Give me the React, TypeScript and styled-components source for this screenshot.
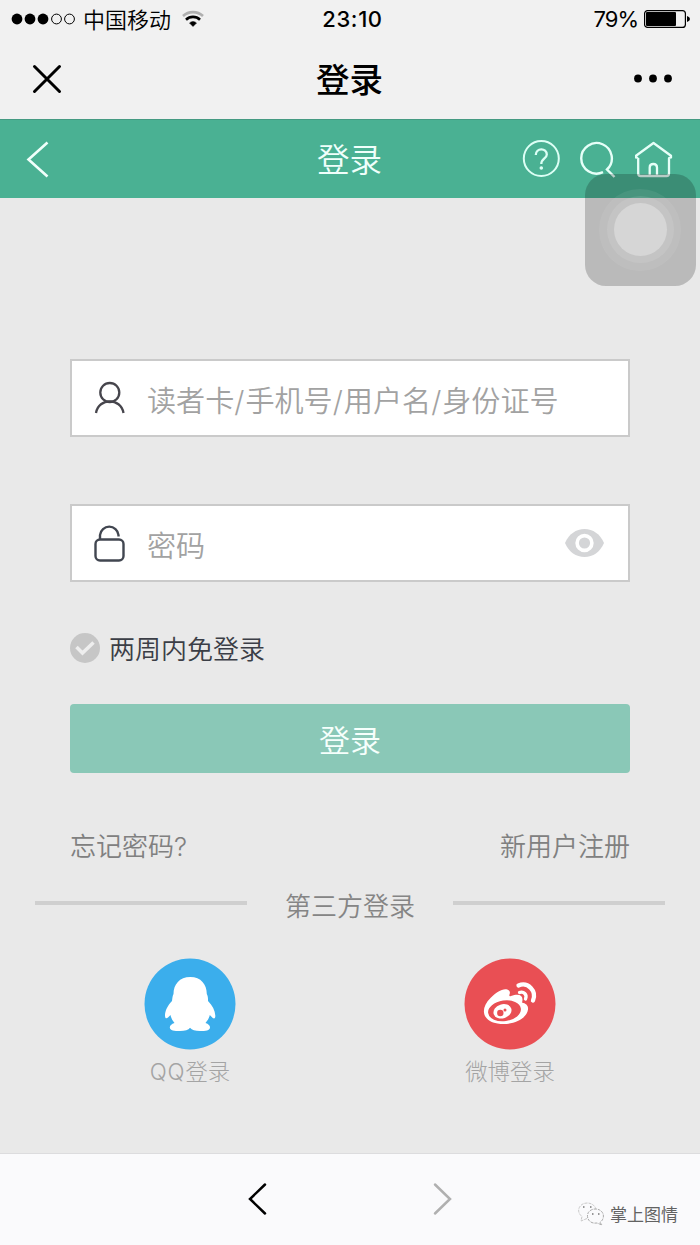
import React from "react";
import styled, { createGlobalStyle } from "styled-components";

const GlobalStyle = createGlobalStyle`
  * { box-sizing: border-box; }
  body {
    margin: 0;
    background: #e9e9e9;
    font-family: "Noto Sans CJK SC", sans-serif;
  }
`;

const Screen = styled.div`
  position: relative;
  width: 700px;
  height: 1245px;
  display: flex;
  flex-direction: column;
  background: #e9e9e9;
  overflow: hidden;
`;

const StatusBar = styled.div`
  display: grid;
  grid-template-columns: 1fr auto 1fr;
  align-items: center;
  height: 38px;
  padding: 0 10px 0 11px;
  background: #f1f1f1;
  color: #000;
`;

const StatusGroup = styled.div<{ $end?: boolean }>`
  display: flex;
  align-items: center;
  justify-content: ${(p) => (p.$end ? "flex-end" : "flex-start")};
`;

const Carrier = styled.span`
  margin: 0 11px 0 7px;
  font-size: 22px;
  font-weight: 350;
  line-height: 36px;
  padding-bottom: 2px;
`;

const Clock = styled.span`
  padding: 1px 0 0 4px;
  font: 500 22px/37px Inter, sans-serif;
  letter-spacing: 0.6px;
`;

const Percent = styled.span`
  margin-right: 6px;
  padding-top: 1px;
  font: 400 22px/37px Inter, sans-serif;
  letter-spacing: -1px;
`;

const TitleBar = styled.header`
  display: grid;
  grid-template-columns: 1fr auto 1fr;
  align-items: center;
  height: 81px;
  padding: 0 27px 0 32px;
  background: #f1f1f1;
`;

const TitleText = styled.h1`
  margin: 0;
  padding: 0 6px 2px 0;
  font-size: 33.5px;
  font-weight: 500;
  line-height: 78px;
`;

const Green = styled.header`
  display: grid;
  grid-template-columns: 1fr auto 1fr;
  align-items: center;
  height: 79px;
  padding: 0 27px 0 26px;
  border-top: 1px solid #459a82;
  background: #4ab193;
  color: #f0fffb;
`;

const PageTitle = styled.h2`
  margin: 0;
  padding: 0 0 4px;
  font-size: 32.5px;
  font-weight: 350;
  line-height: 73px;
`;

const Actions = styled.div`
  display: flex;
  justify-content: flex-end;
  align-items: center;
  gap: 19px;
`;

const Content = styled.main`
  flex: 1;
  display: flex;
  flex-direction: column;
  padding-top: 161px;
`;

const Form = styled.form`
  display: flex;
  flex-direction: column;
  padding: 0 70px;
`;

const Field = styled.label<{ $gap: number }>`
  display: flex;
  align-items: center;
  height: 78px;
  margin-bottom: ${(p) => p.$gap}px;
  padding: 0 24px 0 22px;
  border: 2px solid #cacaca;
  background: #fff;
`;

const Placeholder = styled.span`
  flex: 1;
  height: 40px;
  margin: 1px 0 0 22px;
  color: #a2a2a2;
  font-size: 29.1px;
  font-weight: 350;
  line-height: 40px;
  white-space: nowrap;
`;

const Remember = styled.label`
  display: flex;
  align-items: center;
  gap: 8px;
  height: 38px;
  color: #3b3e46;
  font-size: 26px;
  font-weight: 350;
  line-height: 38px;
`;

const Submit = styled.button`
  height: 69px;
  margin-top: 37px;
  padding: 0;
  border: 0;
  border-radius: 4px;
  background: #8ac8b7;
  color: #f6fffc;
  font: 350 31px/68px "Noto Sans CJK SC", sans-serif;
`;

const Links = styled.div`
  display: flex;
  justify-content: space-between;
  height: 38px;
  margin-top: 53px;
  color: #808080;
  font-size: 26px;
  font-weight: 350;
  line-height: 38px;
`;

const Latin = styled.span<{ $spacing?: number }>`
  font-family: Inter, sans-serif;
  line-height: 1;
  letter-spacing: ${(p) => p.$spacing ?? 0}px;
`;

const Divider = styled.div`
  display: flex;
  align-items: center;
  justify-content: space-between;
  margin-top: 22px;
  padding: 0 35px 0 35px;
  height: 38px;
  color: #858585;
  font-size: 26px;
  font-weight: 350;
  line-height: 38px;
`;

const Rule = styled.span`
  width: 212px;
  height: 4px;
  margin-bottom: 4px;
  background: #cfcfcf;
`;

const Providers = styled.div`
  display: flex;
  justify-content: space-between;
  margin-top: 34px;
  padding: 0 130px;
`;

const Provider = styled.div`
  display: flex;
  flex-direction: column;
  align-items: center;
  width: 120px;
  color: #a4a4a4;
`;

const ProviderName = styled.span`
  height: 36px;
  margin-top: 2px;
  font-size: 22.4px;
  font-weight: 300;
  line-height: 36px;
`;

const Toolbar = styled.footer`
  display: flex;
  align-items: center;
  height: 92px;
  padding: 0 0 2px 247px;
  border-top: 1px solid #dcdcde;
  background: #fafafc;
`;

const NavGlyph = styled.svg`
  margin-right: 165px;
`;

const Watermark = styled.div`
  position: absolute;
  right: 22px;
  bottom: 18px;
  display: flex;
  align-items: center;
  gap: 5px;
  color: #626262;
  font-size: 17px;
  line-height: 26px;
`;

const TouchPad = styled.div`
  position: absolute;
  top: 174px;
  left: 584.5px;
  width: 111px;
  height: 111.5px;
  border-radius: 21px;
  background: rgba(0, 0, 0, 0.2);
  display: flex;
  align-items: center;
  justify-content: center;
`;

const TouchRing = styled.div<{ $size: number; $alpha: number }>`
  display: flex;
  align-items: center;
  justify-content: center;
  width: ${(p) => p.$size}px;
  height: ${(p) => p.$size}px;
  border-radius: 50%;
  background: rgba(255, 255, 255, ${(p) => p.$alpha});
`;

const SignalDots = () => (
  <svg width="65" height="14" viewBox="0 0 65 14">
    {[6, 19, 32].map((x) => <circle key={x} cx={x} cy="7" r="5.4" />)}
    {[45.5, 58.5].map((x) => <circle key={x} cx={x} cy="7" r="4.9" fill="none" stroke="#000" strokeWidth="1" />)}
  </svg>
);

const Wifi = () => (
  <svg width="22" height="18" viewBox="0 0 22 18" fill="none" strokeWidth="2.6">
    <path d="M1 6C6.500 .8 15.500 .8 21 6" stroke="#b0b0b0" />
    <path d="M4 9.700C8 5.900 14 5.900 18 9.700" stroke="#000" />
    <path d="M7.500 13C9.700 11 12.300 11 14.500 13L11 16.500Z" fill="#000" stroke="#000" strokeWidth=".5" />
  </svg>
);

const Battery = () => (
  <svg width="46" height="18" viewBox="0 0 46 18">
    <rect x=".6" y=".6" width="40.8" height="16.8" rx="3" fill="none" stroke="#000" strokeWidth="1.2" />
    <rect x="2" y="2" width="30" height="14" rx="1" />
    <path d="M43 6q3 .8 3 3t-3 3z" />
  </svg>
);

const Eye = () => (
  <svg width="39" height="28" viewBox="0 0 39 28">
    <path d="M0 14C4 5 11 0 19.5 0S35 5 39 14C35 23 28 28 19.5 28S4 23 0 14Z" fill="#d4d5d7" />
    <circle cx="19.5" cy="14" r="7.4" fill="#d4d5d7" stroke="#fff" strokeWidth="3.6" />
  </svg>
);

const QQ = () => (
  <svg width="92" height="92" viewBox="0 0 92 92">
    <circle cx="46" cy="46" r="45.5" fill="#3baeec" />
    <path fill="#fff" d="M46.300 19C35.500 19 29.500 26.500 29.500 36C28.300 38.500 28.300 41 28 43C23.500 47.500 21 53 21 57.500C21 60.500 22.300 61 24 59.500L26.500 57C27 60 28.500 62.500 30.500 65C27.500 66 25.800 67.500 25.800 69.500C25.800 72.500 30.500 73 36 73C41 73 44.500 72 46 69.800C48 72 51 73 56 73C61.500 73 66 72.500 66 69.500C66 67.500 64.500 66 61.500 65C63.500 62.500 65.300 60 65.800 57L68.500 59.800C70.500 61.500 71.500 60 71.300 57.500C71 52.500 68.500 47.500 64 43C64 41 64.200 38.500 62.800 36C62.800 26.500 57 19 46.300 19Z" />
  </svg>
);

const Weibo = () => (
  <svg width="92" height="92" viewBox="0 0 92 92">
    <circle cx="46" cy="46" r="45.500" fill="#e94f54" />
    <path fill="#fff" d="M45 32.500C41 29 33 33 26.500 40C15.500 51 18.500 63 33.500 65.500C48 68 63 61 64 51.500C64.500 47.500 62 45.500 58 44.500C60 38 56 35 47 38C45.500 38.500 45 38 45.500 36.500C46.200 34.500 46 33.500 45 32.500Z" />
    <ellipse cx="40.500" cy="52.800" rx="16.500" ry="10.300" transform="rotate(-8 40.500 52.800)" fill="#e94f54" />
    <ellipse cx="38.500" cy="53.300" rx="9.200" ry="7" transform="rotate(-18 38.500 53.300)" fill="#fff" />
    <circle cx="36.300" cy="55" r="3.200" fill="#e94f54" />
    <circle cx="41" cy="52" r="1.500" fill="#e94f54" />
    <g fill="none" stroke="#fff" strokeLinecap="round">
      <path d="M54.500 27.500C64 23.500 73 33 69 42.500" strokeWidth="4.300" />
      <path d="M55.500 34.500C59.500 33 63.500 36.500 61.500 41" strokeWidth="3.300" />
    </g>
  </svg>
);

export default function App() {
  return (
    <Screen>
      <GlobalStyle />
      <StatusBar>
        <StatusGroup>
          <SignalDots />
          <Carrier>中国移动</Carrier>
          <Wifi />
        </StatusGroup>
        <Clock>23:10</Clock>
        <StatusGroup $end>
          <Percent>79%</Percent>
          <Battery />
        </StatusGroup>
      </StatusBar>
      <TitleBar>
        <svg width="30" height="30" viewBox="0 0 30 30" fill="none" stroke="#000" strokeWidth="3" strokeLinecap="round">
          <path d="M2.500 2.500L27.500 27.500M27.500 2.500L2.500 27.500" />
        </svg>
        <TitleText>登录</TitleText>
        <Actions>
          <svg width="39" height="10" viewBox="0 0 39 10">
            {[4, 19, 34].map((x) => <circle key={x} cx={x} cy="4.500" r="3.900" />)}
          </svg>
        </Actions>
      </TitleBar>
      <Green>
        <svg width="24" height="38" viewBox="0 0 24 38" fill="none" stroke="#f0fffb" strokeWidth="2.600">
          <path d="M21.500 2.500L2.500 19.500L21.500 36.500" />
        </svg>
        <PageTitle>登录</PageTitle>
        <Actions>
          <svg width="38" height="38" viewBox="0 0 38 38" fill="none" stroke="#dcfff5" strokeWidth="2">
            <circle cx="19.300" cy="18.500" r="17.500" />
            <path d="M13.800 15C13.800 7.500 24.800 7.500 24.800 14.500C24.800 18.500 19.300 18.500 19.300 24" strokeWidth="2.300" />
            <circle cx="19.300" cy="28" r="1.800" fill="#dcfff5" stroke="none" />
          </svg>
          <svg width="37" height="38" viewBox="0 0 37 38" fill="none" stroke="#e6fff8" strokeWidth="2.400">
            <path d="M24 32.200A15.300 15.300 0 1 1 28 29.500L35.500 37" />
          </svg>
          <svg width="38" height="38" viewBox="0 0 38 38" fill="none" stroke="#e6fff8" strokeWidth="2.300" strokeLinejoin="round">
            <path d="M3.200 18V33.500Q3.200 36 5.700 36H31.500Q34 36 34 33.500V18L36 17.500V15.800L18.500 3L1 15.800V17.500L3.200 18M14.700 36V27.500Q14.700 24 18.300 24T22 27.500V36" />
          </svg>
        </Actions>
      </Green>
      <Content>
        <Form>
          <Field $gap={67}>
            <svg width="31" height="34" viewBox="0 0 31 34" fill="none" stroke="#46454c" strokeWidth="2.300">
              <circle cx="15.800" cy="11.500" r="9.500" />
              <path d="M2 32C4.500 16.500 27 16.500 29.500 32" />
            </svg>
            <Placeholder>
              读者卡<Latin $spacing={1}>/</Latin>手机号<Latin $spacing={1}>/</Latin>用户名<Latin $spacing={1}>/</Latin>身份证号
            </Placeholder>
          </Field>
          <Field $gap={47}>
            <svg width="31" height="38" viewBox="0 0 31 38" fill="none" stroke="#414650" strokeWidth="2.400">
              <path d="M6 15.500V11A9.300 9.300 0 0 1 24.500 11V12.500" />
              <rect x="1.500" y="15.500" width="28" height="21" rx="4.500" />
            </svg>
            <Placeholder>密码</Placeholder>
            <Eye />
          </Field>
          <Remember>
            <svg width="31" height="30" viewBox="0 0 31 30">
              <circle cx="15" cy="15" r="15" fill="#c6c6c6" />
              <path d="M6.500 14L12.500 20L23.500 9.500" fill="none" stroke="#eee" strokeWidth="3.500" />
            </svg>
            两周内免登录
          </Remember>
          <Submit type="button">登录</Submit>
          <Links>
            <span>忘记密码<Latin>?</Latin></span>
            <span>新用户注册</span>
          </Links>
        </Form>
        <Divider>
          <Rule />
          第三方登录
          <Rule />
        </Divider>
        <Providers>
          <Provider><QQ /><ProviderName><Latin $spacing={0.8}>QQ</Latin>登录</ProviderName></Provider>
          <Provider><Weibo /><ProviderName>微博登录</ProviderName></Provider>
        </Providers>
      </Content>
      <Toolbar>
        <NavGlyph width="20" height="34" viewBox="0 0 20 34" fill="none" stroke="#000" strokeWidth="2.500" strokeLinecap="round">
          <path d="M18 2.500L3 17L18 31.500" />
        </NavGlyph>
        <svg width="20" height="34" viewBox="0 0 20 34" fill="none" stroke="#b0b0b0" strokeWidth="2.500" strokeLinecap="round">
          <path d="M3 2.500L18 17L3 31.500" />
        </svg>
      </Toolbar>
      <Watermark>
        <svg width="28" height="24" viewBox="0 0 28 24" fill="none" stroke="#aaa" strokeWidth="1" strokeDasharray="3 1">
          <path d="M10 16.500L4 19L5 14.500C-2 9 3 1 10 1C15 1 18 4 19 7" stroke="#c8c8c8" />
          <path d="M23 20.500L25 23L20 21C14 22 10 18 10.500 13C11 9 15 7 18 7C27 7 29 16 23 20.500Z" />
          <path d="M6 5h1.500M13 5h1.500M15 12h1.500M21 12h1.500" stroke="#777" strokeWidth="1.600" />
        </svg>
        掌上图情
      </Watermark>
      <TouchPad>
        <TouchRing $size={82} $alpha={0.07}>
          <TouchRing $size={67} $alpha={0.1}>
            <TouchRing $size={53} $alpha={0.3} />
          </TouchRing>
        </TouchRing>
      </TouchPad>
    </Screen>
  );
}
